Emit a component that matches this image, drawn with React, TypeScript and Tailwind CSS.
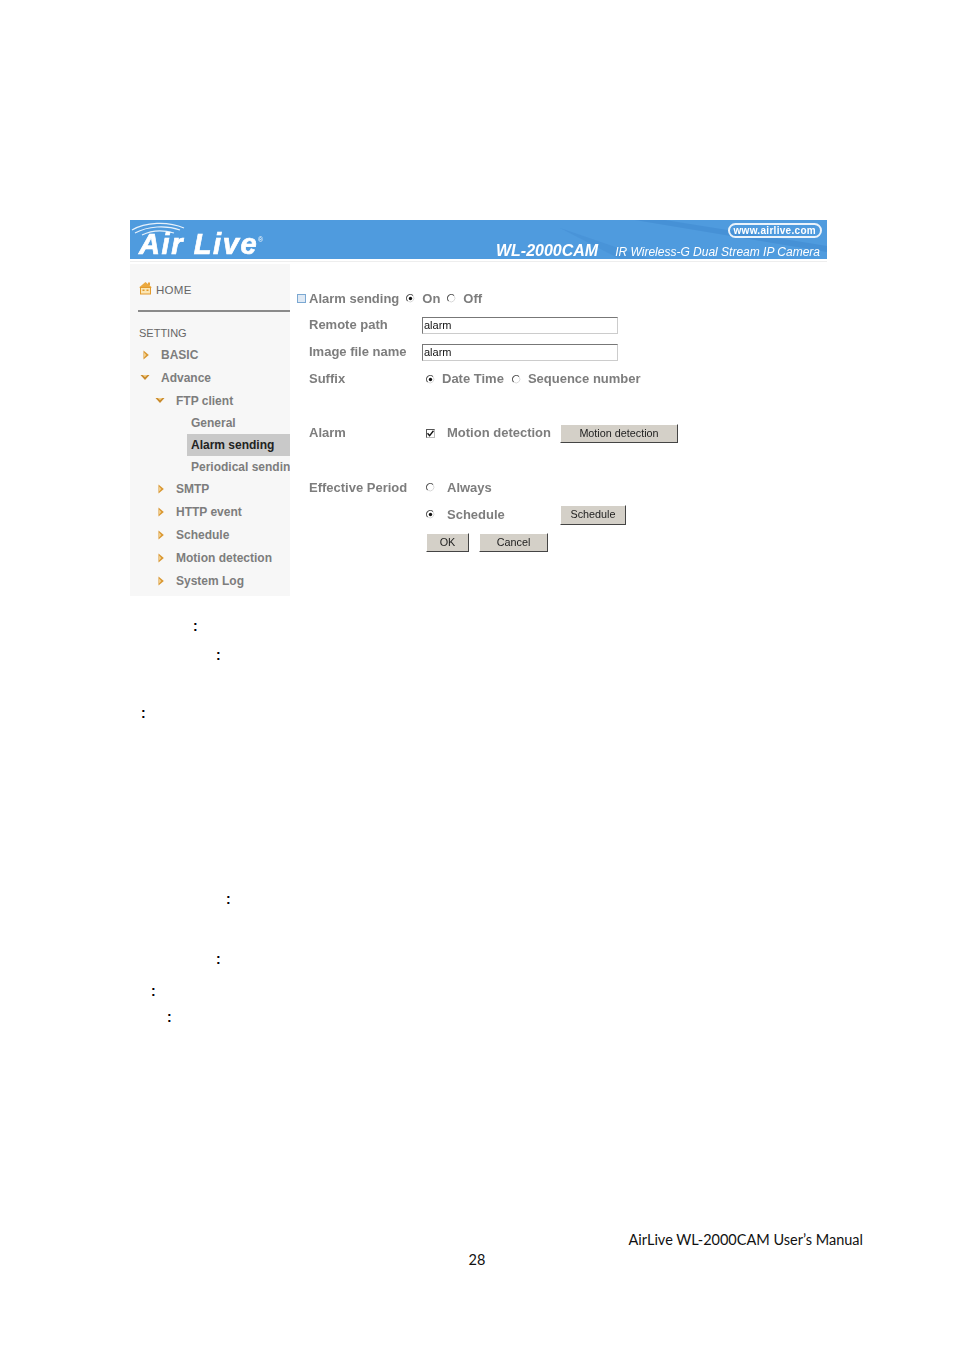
import React from 'react';

const sans = "font-['Liberation_Sans',Arial,sans-serif]";

const Radio = ({ on }: { on?: boolean }) => (
  <svg width="9" height="9" viewBox="0 0 9 9" className="shrink-0">
    <path d="M7 1.6A3.8 3.8 0 0 0 1.6 7" fill="none" stroke="#555" strokeWidth="1.1" />
    <path d="M7.4 2.2A3.8 3.8 0 0 1 2.2 7.4" fill="none" stroke="#d8d8d8" strokeWidth="1" />
    {on && <circle cx="4.5" cy="4.5" r="1.7" fill="#111" />}
  </svg>
);

const Arrow = ({ open }: { open?: boolean }) =>
  open ? (
    <svg width="10" height="7" viewBox="0 0 10 7" className="shrink-0">
      <path d="M0.5 1H9.5L5 6Z" fill="#c98a2b" />
      <path d="M2.5 1H7.5L5 3.2Z" fill="#f3cf8a" />
    </svg>
  ) : (
    <svg width="6" height="10" viewBox="0 0 6 10" className="shrink-0">
      <path d="M0.5 0.5V9.5L5.8 5Z" fill="#d9962f" />
      <path d="M1 2.5V7.5L3.4 5Z" fill="#f3cf8a" />
    </svg>
  );

const Home = () => (
  <svg width="13" height="13" viewBox="0 0 13 13" className="shrink-0 mb-[5px]">
    <rect x="9" y="0.5" width="2" height="3" fill="#e8a23a" />
    <path d="M6.5 0L13 5.5H0Z" fill="#eba93f" />
    <rect x="1.5" y="5.5" width="10" height="6.5" fill="#fbe6b4" stroke="#e39a2c" />
    <rect x="3.5" y="7.5" width="2" height="1.5" fill="#e39a2c" />
    <rect x="7.5" y="7.5" width="2" height="1.5" fill="#e39a2c" />
  </svg>
);

const NavItem = ({ label, indent, open, leaf, active, h = 'h-[23px]' }: { label: string; indent: string; open?: boolean; leaf?: boolean; active?: boolean; h?: string }) => (
  <div className={`flex items-center ${h} ${indent}`}>
    {!leaf && (
      <span className={`w-[22px] flex justify-start ${open ? 'pl-[1px]' : 'pl-[4px]'}`}>
        <Arrow open={open} />
      </span>
    )}
    <span className={`whitespace-nowrap ${active ? 'text-[#222]' : 'text-[#7d7d7d]'}`}>{label}</span>
  </div>
);

const Btn = ({ label, w, h = 'h-[19px]' }: { label: string; w: string; h?: string }) => (
  <div className={`${w} ${h} bg-[#d4d0c8] border border-t-white border-l-white border-r-[#444] border-b-[#444] flex items-center justify-center text-[10.8px] font-normal text-[#222]`}>
    {label}
  </div>
);

const TextBox = () => (
  <input
    readOnly
    defaultValue="alarm"
    className={`w-[196px] h-[17px] bg-white border border-t-[#777] border-l-[#777] border-r-[#ccc] border-b-[#ccc] pl-[1px] text-[11px] font-normal text-[#111] outline-none ${sans}`}
  />
);

const Row = ({ label, h, children }: { label?: string; h: string; children?: React.ReactNode }) => (
  <div className={`flex items-center ${h}`}>
    <div className="w-[125px] pl-[12px] shrink-0 whitespace-nowrap">{label}</div>
    {children}
  </div>
);

const colons = [
  { pl: 'pl-[193px]', mt: 'mt-[22px]' },
  { pl: 'pl-[216px]', mt: 'mt-[13px]' },
  { pl: 'pl-[141px]', mt: 'mt-[42px]' },
  { pl: 'pl-[226px]', mt: 'mt-[170px]' },
  { pl: 'pl-[216px]', mt: 'mt-[44px]' },
  { pl: 'pl-[151px]', mt: 'mt-[16px]' },
  { pl: 'pl-[167px]', mt: 'mt-[10px]' },
];

export default function App() {
  return (
    <div className={`w-[954px] h-[1350px] bg-white overflow-hidden pt-[220px] ${sans}`}>
      <div className="ml-[130px] w-[697px] blur-[0.3px]">
        {/* banner */}
        <div className="relative h-[39px] bg-[#4f9bde] overflow-hidden flex justify-between">
          <svg width="697" height="39" viewBox="0 0 697 39" className="absolute inset-0">
            <path d="M505 0H535L697 26V32Z" fill="#3f88cf" opacity="0.55" />
            <path d="M430 8L520 39H490Z" fill="#3f88cf" opacity="0.35" />
            <path d="M2 10C15 2 38 1 54 8M5 13C18 6 36 5 50 10M12 15C22 10 34 10 44 13" fill="none" stroke="#e6f1fb" strokeWidth="1.2" />
          </svg>
          <div className="relative pl-[9px] pt-[9px] text-[29px] leading-[30px] font-bold italic text-white tracking-[1.6px] whitespace-nowrap [-webkit-text-stroke:0.7px_white]">
            Air Live
            <span className="absolute right-[-5px] top-[16px] text-[7px] leading-[8px] font-normal not-italic tracking-normal [-webkit-text-stroke:0]">®</span>
          </div>
          <div className="relative flex flex-col items-end pr-[5px] pt-[3px] text-white italic font-bold">
            <div className="h-[15px] px-[4px] border-2 border-[#eaf3fb] rounded-[8px] text-[10px] leading-[11px] not-italic tracking-[0.3px]">
              www.airlive.com
            </div>
            <div className="flex items-baseline gap-[17px] mt-[4px] whitespace-nowrap pr-[2px]">
              <span className="text-[16px] leading-[17px] font-bold">WL-2000CAM</span>
              <span className="text-[12px] leading-[17px] font-normal">IR Wireless-G Dual Stream IP Camera</span>
            </div>
          </div>
        </div>
        <div className="mt-[2px] h-px bg-[#eeeeee]" />

        <div className="flex mt-[2px] font-bold text-[12px] text-[#7d7d7d]">
          {/* side menu */}
          <div className="w-[160px] h-[332px] bg-[#f7f7f7] shrink-0 overflow-hidden">
            <div className="flex items-center h-[48px] pl-[1px] ml-[8px] gap-[4px] pt-[8px] border-b-2 border-[#8a8a8a] font-normal">
              <Home />
              <span className="text-[11.5px] text-[#666] tracking-[0.3px]">HOME</span>
            </div>
            <div className="pl-[9px] h-[19px] mt-[12px] flex items-center font-normal text-[11px] text-[#666]">SETTING</div>
            <NavItem label="BASIC" indent="pl-[9px]" />
            <NavItem label="Advance" indent="pl-[9px]" open />
            <NavItem label="FTP client" indent="pl-[24px]" open />
            <NavItem label="General" indent="pl-[61px]" leaf h="h-[22px]" />
            <div className="ml-[57px] bg-[#c9c9c9]">
              <NavItem label="Alarm sending" indent="pl-[4px]" leaf active h="h-[22px]" />
            </div>
            <NavItem label="Periodical sending" indent="pl-[61px]" leaf h="h-[21px]" />
            <NavItem label="SMTP" indent="pl-[24px]" />
            <NavItem label="HTTP event" indent="pl-[24px]" />
            <NavItem label="Schedule" indent="pl-[24px]" />
            <NavItem label="Motion detection" indent="pl-[24px]" />
            <NavItem label="System Log" indent="pl-[24px]" />
          </div>

          {/* settings form */}
          <div className="pl-[7px] pt-[25px] text-[13px] font-bold text-[#7d7d7d] flex-1">
            <div className="flex items-center h-[19px]">
              <span className="w-[9px] h-[9px] border border-[#7ba8d2] bg-[#dfe9f4] mr-[3px]" />
              <span>Alarm sending</span>
              <span className="ml-[7px] mr-[7px]"><Radio on /></span>
              <span>On</span>
              <span className="ml-[7px] mr-[7px]"><Radio /></span>
              <span>Off</span>
            </div>
            <Row label="Remote path" h="h-[26px] mt-[4px]"><TextBox /></Row>
            <Row label="Image file name" h="h-[28px]"><TextBox /></Row>
            <Row label="Suffix" h="h-[26px]">
              <span className="ml-[4px] mr-[7px]"><Radio on /></span>
              <span>Date Time</span>
              <span className="ml-[8px] mr-[7px]"><Radio /></span>
              <span>Sequence number</span>
            </Row>
            <Row label="Alarm" h="h-[28px] mt-[27px]">
              <span className="ml-[4px] mr-[12px] w-[9px] h-[9px] border border-t-[#555] border-l-[#555] border-r-[#bbb] border-b-[#bbb] flex items-center justify-center">
                <svg width="7" height="7" viewBox="0 0 7 7"><path d="M0.5 3.2L2.6 5.6L6.5 0.8" fill="none" stroke="#111" strokeWidth="1.4" /></svg>
              </span>
              <span className="w-[113px] whitespace-nowrap">Motion detection</span>
              <Btn label="Motion detection" w="w-[118px]" />
            </Row>
            <Row label="Effective Period" h="h-[27px] mt-[27px]">
              <span className="ml-[4px] mr-[12px]"><Radio /></span>
              <span>Always</span>
            </Row>
            <Row h="h-[27px]">
              <span className="ml-[4px] mr-[12px]"><Radio on /></span>
              <span className="w-[113px]">Schedule</span>
              <Btn label="Schedule" w="w-[66px]" h="h-[20px]" />
            </Row>
            <div className="flex gap-[10px] ml-[129px] mt-[5px]">
              <Btn label="OK" w="w-[43px]" />
              <Btn label="Cancel" w="w-[69px]" />
            </div>
          </div>
        </div>
      </div>

      {/* manual text: only the colons survive in the scan */}
      <div className="text-[14px] leading-[16px] font-bold text-black">
        {colons.map((c, i) => (
          <div key={i} className={`${c.pl} ${c.mt}`}>:</div>
        ))}
      </div>

      <div className="mt-[205px] font-['Lato',sans-serif] text-[14.5px] leading-[20px] text-[#111]">
        <div className="text-right pr-[91px]">AirLive WL-2000CAM User’s Manual</div>
        <div className="text-center">28</div>
      </div>
    </div>
  );
}
